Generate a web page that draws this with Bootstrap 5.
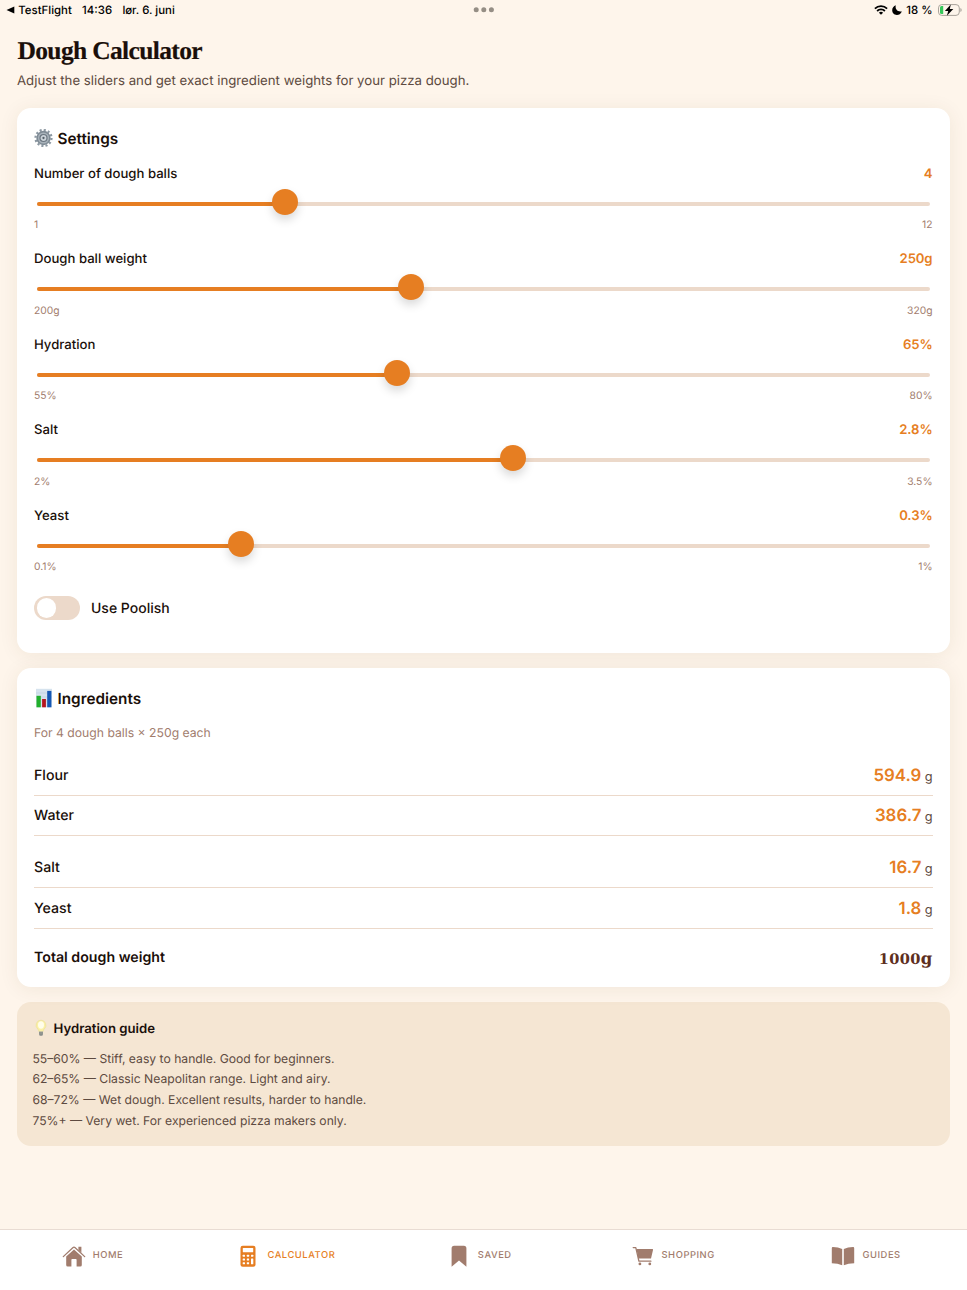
<!DOCTYPE html>
<html lang="en">
<head>
<meta charset="utf-8">
<meta name="viewport" content="width=device-width, initial-scale=1">
<title>Dough Calculator</title>
<link href="https://cdn.jsdelivr.net/npm/bootstrap@5.3.0/dist/css/bootstrap.min.css" rel="stylesheet">
<style>
:root{--orange:#e67e22;--cream:#fef5eb;--sand:#ecd9ca;--brown:#a17c6d;--ink:#1a0f0a;--soft:#5d4a40}
body{font-family:Inter,"Liberation Sans",sans-serif;background:var(--cream);color:var(--ink);height:1290px;overflow:hidden;font-size:13.15px;line-height:20px;text-rendering:geometricPrecision}
.status{height:20px;font-size:11.4px;font-weight:500;color:#000;padding:0 5.5px 0 6px}
.page{padding:15px 17px 0;height:1209px}
h1{font:700 25.5px/32px "Liberation Serif",serif;letter-spacing:-.65px;margin:0;padding-left:.5px;-webkit-text-stroke:.2px}
.intro{font-size:13.22px;color:var(--soft);margin:4px 0 17px}
.panel{background:#fff;border:0;border-radius:14px;padding:18px 17.5px 0 17px;box-shadow:0 2px 19px rgba(93,58,26,.08);color:var(--ink)}
.panel h2{font-size:15.3px;font-weight:600;line-height:24px;margin:0;height:24px}
.panel h2 span{padding-top:2px}
.panel h2 svg{margin-right:4.5px}
.settings{height:544.5px;margin-bottom:15.5px}
.slot{margin-bottom:16px;font-weight:500}
.val{color:var(--orange);font-weight:600;letter-spacing:-.1px}
.track-row{height:33.5px;padding:18px 2.5px 0}
.track{height:4px;border-radius:2px;background:var(--sand)}
.fill{height:4px;border-radius:2px;background:var(--orange);width:calc(10px + (100% - 21px)*var(--v))}
.thumb{width:26px;height:26px;border-radius:50%;background:var(--orange);top:-13px;left:calc(-2px + (100% - 21px)*var(--v));box-shadow:0 5px 10px rgba(0,0,0,.15)}
.ends{height:16px;line-height:16px;font-size:10.3px;font-weight:400;color:var(--brown)}
.toggle{width:45.5px;height:24.5px;border-radius:13px;background:var(--sand);padding:2.5px}
.toggle i{display:block;width:19.5px;height:19.5px;border-radius:50%;background:#fff}
.toggle-label{margin-left:11.5px;padding-top:1.5px;font-size:14px;font-weight:500}
.ingredients{height:318.5px;margin-bottom:15.5px}
.sub{font-size:12.2px;color:var(--brown);margin:12.5px 0}
.ing{height:40.7px;border-bottom:1px solid var(--sand);font-size:14.17px;font-weight:500}
.ing b{font-size:16.85px;font-weight:600;color:var(--orange)}
.ing>span{padding-top:1.8px}
.ing>span+span{padding-top:3.5px}
.ing small{font-size:12.8px;font-weight:400;color:var(--soft);margin-left:-.5px}
.total{height:57px;font-size:14.18px;font-weight:600}
.total>span{padding-top:1.6px}
.total .grand{font:700 14.6px/20px "DejaVu Serif",serif;color:#5d2e20;letter-spacing:.3px;padding-top:4.5px}
.guide{background:#f5e6d3;border-radius:14px;height:143.5px;padding:16px 15px}
.guide h3{font-size:13.16px;font-weight:600;line-height:20px;height:20px;margin:0 0 10.5px;color:#1a0f0a}
.guide h3 span{padding-top:1.5px}
.guide p{font-size:12.17px;line-height:20.8px;margin:0;padding-left:.4px;color:var(--soft)}
.tabs{height:61px;background:#fff;border-top:1px solid #e9dcd3;color:var(--brown);font-size:9.4px;font-weight:500;letter-spacing:.55px}
.tabs a{color:inherit;text-decoration:none;height:51px;flex:1 1 0;padding-right:8.5px}
.tabs a.active{color:var(--orange)}
.tabs span{padding-top:1.6px}
.tabs svg{margin-right:7px}
svg{flex:none;display:block}
</style>
</head>
<body>
<div class="status d-flex justify-content-between align-items-center position-relative">
  <div class="d-flex align-items-center"><svg width="9" height="8" viewBox="0 0 9 8"><path d="M0.5 4 8.300.4v7.200z"/></svg><span style="margin-left:3.300px">TestFlight</span><span style="margin-left:10.3px">14:36</span><span style="margin-left:10.3px">lør. 6. juni</span></div>
  <svg class="position-absolute top-0 start-50 translate-middle-x" width="22" height="20" fill="#958e85"><circle cx="3.2" cy="9.7" r="2.5"/><circle cx="10.8" cy="9.7" r="2.5"/><circle cx="18.4" cy="9.7" r="2.5"/></svg>
  <div class="d-flex align-items-center">
    <svg width="14" height="10" viewBox="0 0 14 10" fill="none" stroke="#000" stroke-width="1.8"><path d="M.9 3.6a8.7 8.7 0 0 1 12.2 0M3.1 6a5.6 5.6 0 0 1 7.8 0"/><path d="M7 9.8 4.9 7.7a3 3 0 0 1 4.2 0z" fill="#000" stroke="none"/></svg>
    <svg width="10" height="10" viewBox="0 0 10 10" style="margin:0 4.5px 0 3.5px"><path d="M3.8.3C2.800 4 5.500 7.300 9.900 6.400 8.800 8.800 6.900 9.900 4.900 9.900 2.200 9.900.2 7.800.2 5.200.2 3 1.600 1 3.800.3z"/></svg>
    <span>18 %</span>
    <svg width="24" height="12" viewBox="0 0 24 12" style="margin-left:5px"><rect x=".5" y=".6" width="20.800" height="10.800" rx="3.300" fill="none" stroke="#a9a39b"/><path d="M22.400 4v4q1.300-.6 1.300-2t-1.300-2" fill="#a9a39b"/><path d="M3.500 2.100h1.700v7.800H3.500Q2 9.900 2 8.400V3.600q0-1.500 1.500-1.500z" fill="#35c759"/><path d="M12.800.5 6.900 6.900h3.300L8.900 11.700l6.400-6.700h-3.500z"/></svg>
  </div>
</div>
<main class="page">
  <h1>Dough Calculator</h1>
  <p class="intro">Adjust the sliders and get exact ingredient weights for your pizza dough.</p>

  <section class="card panel settings">
    <h2 class="d-flex align-items-center">
      <svg width="19" height="20" viewBox="0 0 20 20"><circle cx="10" cy="10" r="8.400" fill="none" stroke="#8c98a2" stroke-width="2.400" stroke-dasharray="2.200 2.198"/><circle cx="10" cy="10" r="6.700" fill="#a9b3bb" stroke="#7f8b95" stroke-width="1.700"/><circle cx="10" cy="10" r="3.700" fill="#cbd3d9" stroke="#6b7680" stroke-width="1.200"/><circle cx="10" cy="10" r="1.200" fill="#56616b"/></svg><span>Settings</span></h2>
    <div style="height:13.9px"></div>
    <div id="sliders"></div>
    <div class="d-flex align-items-center" style="margin-top:4.6px"><span class="toggle"><i></i></span><span class="toggle-label">Use Poolish</span></div>
  </section>

  <section class="card panel ingredients">
    <h2 class="d-flex align-items-center">
      <svg width="19" height="20" viewBox="0 0 19 20"><path d="M2 .8h16v18.500H2z" fill="#d6e3ee"/><path d="M2 5h16M2 9h16M2 13h16" stroke="#bccddd" stroke-width=".6"/><path d="M2.500 7.800h4.300v11.500H2.500z" fill="#21b02c"/><path d="M8.100 11h3.800v8.300H8.100z" fill="#b3161e"/><path d="M13.200 2.900h4.200v16.400h-4.200z" fill="#1658b4"/></svg><span>Ingredients</span></h2>
    <p class="sub">For 4 dough balls × 250g each</p>
    <div class="ing d-flex justify-content-between align-items-center"><span>Flour</span><span><b>594.9</b> <small>g</small></span></div>
    <div class="ing d-flex justify-content-between align-items-center"><span>Water</span><span><b>386.7</b> <small>g</small></span></div>
    <div style="height:11.2px"></div>
    <div class="ing d-flex justify-content-between align-items-center"><span>Salt</span><span><b>16.7</b> <small>g</small></span></div>
    <div class="ing d-flex justify-content-between align-items-center"><span>Yeast</span><span><b>1.8</b> <small>g</small></span></div>
    <div class="total d-flex justify-content-between align-items-center"><span>Total dough weight</span><span class="grand">1000<span style="font-size:16.5px">g</span></span></div>
  </section>

  <section class="guide">
    <h3 class="d-flex align-items-center"><svg width="17" height="18" viewBox="0 0 17 18" style="margin-right:4.500px"><path d="M9 1.200a5 5 0 0 0-3.300 8.700c.9.900 1 1.600 1.200 2.600h4.200c.2-1 .3-1.700 1.200-2.600A5 5 0 0 0 9 1.200z" fill="#fbf0a6" stroke="#eadf9b" stroke-width=".7"/><ellipse cx="9" cy="6" rx="3" ry="3.700" fill="#fffde9"/><path d="M7 12.500h4v2.700q0 1.800-2 1.800t-2-1.800z" fill="#a7a9a4"/><path d="M7 14h4M7.500 15.800h3" stroke="#6f726f" stroke-width=".7"/></svg><span>Hydration guide</span></h3>
    <p>55–60% — Stiff, easy to handle. Good for beginners.</p>
    <p>62–65% — Classic Neapolitan range. Light and airy.</p>
    <p>68–72% — Wet dough. Excellent results, harder to handle.</p>
    <p>75%+ — Very wet. For experienced pizza makers only.</p>
  </section>
</main>
<nav class="tabs d-flex">
  <a href="#" class="d-flex align-items-center justify-content-center"><svg width="24" height="24" viewBox="0 0 24 24" fill="currentColor"><path d="m12 5.600 7.800 7V21q0 1.500-1.500 1.500h-3.700v-6.700q0-.8-.8-.8h-3.600q-.8 0-.8.8v6.700H5.700q-1.500 0-1.500-1.500v-8.400z"/><path d="M1.300 12.600 10.800 3.700q1.200-1.100 2.400 0l9.500 8.900" fill="none" stroke="currentColor" stroke-width="1.300" stroke-linecap="round"/><path d="M16.400 2.700h3v6l-3-2.800z"/></svg><span>HOME</span></a>
  <a href="#" class="d-flex align-items-center justify-content-center active"><svg width="24" height="24" viewBox="0 0 24 24"><rect x="4.500" y="1.700" width="15" height="21" rx="2.200" fill="currentColor"/><rect x="6.800" y="4" width="10.400" height="4.300" rx=".5" fill="#fff"/><g fill="#fff"><rect x="6.700" y="10.700" width="2.300" height="2" rx=".5"/><rect x="10.800" y="10.700" width="2.300" height="2" rx=".5"/><rect x="15" y="10.700" width="2.300" height="2" rx=".5"/><rect x="6.700" y="14.500" width="2.300" height="2" rx=".5"/><rect x="10.800" y="14.500" width="2.300" height="2" rx=".5"/><rect x="6.700" y="18.300" width="2.300" height="2" rx=".5"/><rect x="10.800" y="18.300" width="2.300" height="2" rx=".5"/><rect x="15" y="14.500" width="2.300" height="5.800" rx=".5"/></g></svg><span>CALCULATOR</span></a>
  <a href="#" class="d-flex align-items-center justify-content-center"><svg width="24" height="24" viewBox="0 0 24 24" fill="currentColor"><path d="M4.600 4.200q0-2.500 2.500-2.500h9.800q2.500 0 2.500 2.500v18.500L12 16.500l-7.400 6.200z"/></svg><span>SAVED</span></a>
  <a href="#" class="d-flex align-items-center justify-content-center"><svg width="24" height="24" viewBox="0 0 24 24" fill="currentColor"><path d="M5.500 5.100h16q.7 0 .5.800l-2 8.700H7.300z"/><path d="M2.200 3.600h2.600l3.100 13.600h12" fill="none" stroke="currentColor" stroke-width="1.300" stroke-linecap="round" stroke-linejoin="round"/><circle cx="8.900" cy="19.900" r="1.400"/><circle cx="18.800" cy="19.900" r="1.400"/></svg><span>SHOPPING</span></a>
  <a href="#" class="d-flex align-items-center justify-content-center"><svg width="24" height="24" viewBox="0 0 24 24" fill="currentColor"><path d="M.8 4.200q0-1.200 1.200-1.100 5.200.2 9.200 1.900v16.200q-4.300-1.800-10.400-2zM23.200 4.200q0-1.200-1.200-1.100-5.200.2-9.200 1.900v16.200q4.300-1.800 10.400-2z"/></svg><span>GUIDES</span></a>
</nav>
<script src="https://cdn.jsdelivr.net/npm/bootstrap@5.3.0/dist/js/bootstrap.bundle.min.js"></script>
<script>
const sliders = [
  ['Number of dough balls', '4', '1', '12', 3 / 11],
  ['Dough ball weight', '250g', '200g', '320g', 50 / 120],
  ['Hydration', '65%', '55%', '80%', 0.4],
  ['Salt', '2.8%', '2%', '3.5%', 0.8 / 1.5],
  ['Yeast', '0.3%', '0.1%', '1%', 0.2 / 0.9]
];
document.getElementById('sliders').innerHTML = sliders.map(([name, val, min, max, v]) => `
  <div class="slot">
    <div class="d-flex justify-content-between"><span>${name}</span><span class="val">${val}</span></div>
    <div class="track-row"><div class="track position-relative" style="--v:${v}"><div class="fill"></div><div class="thumb position-absolute"></div></div></div>
    <div class="ends d-flex justify-content-between"><span>${min}</span><span>${max}</span></div>
  </div>`).join('');
</script>
</body>
</html>
